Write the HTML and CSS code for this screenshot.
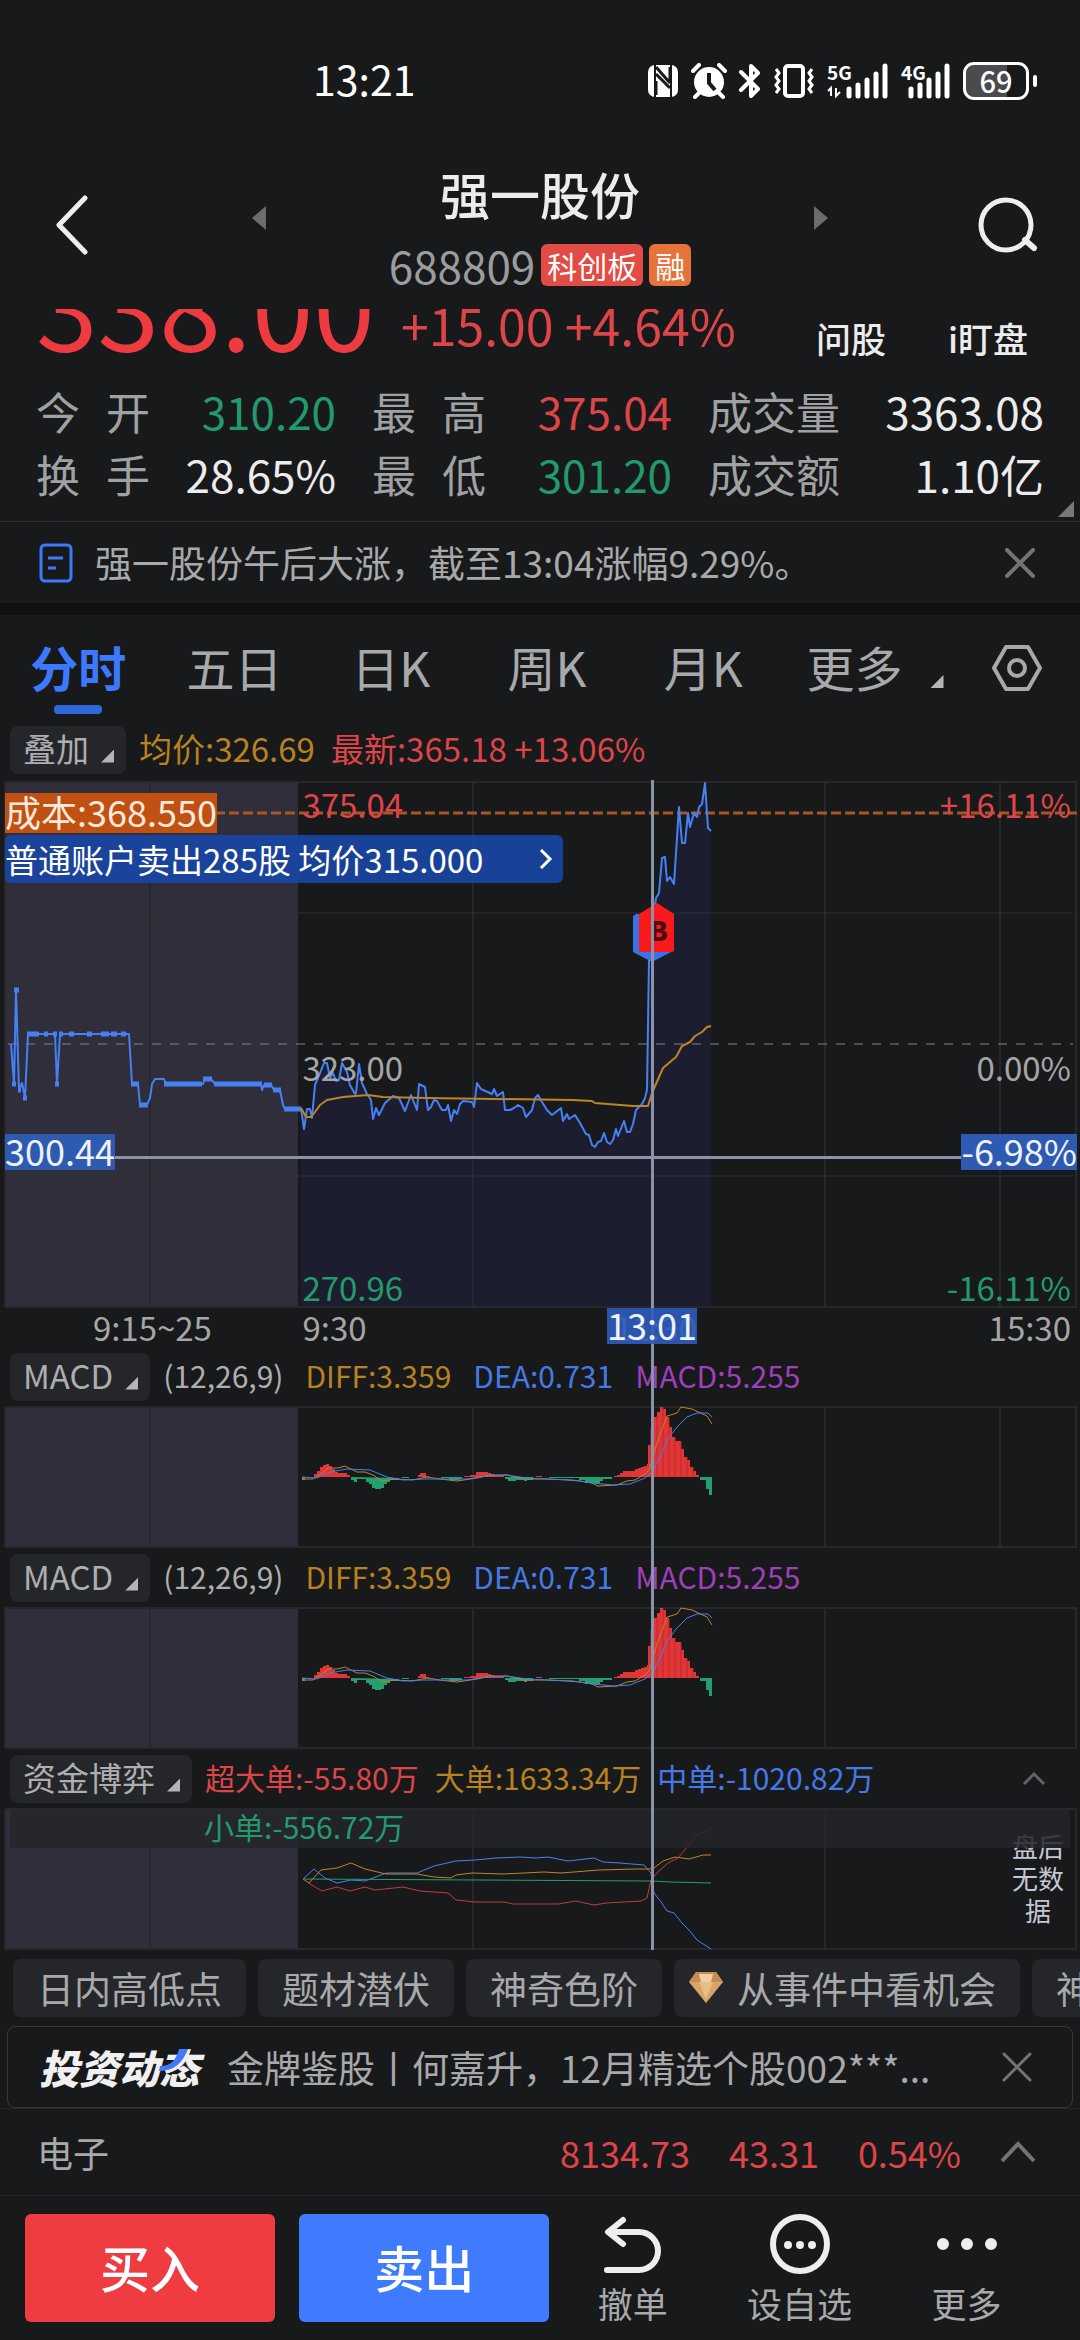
FILE: index.html
```html
<!DOCTYPE html>
<html lang="zh-CN">
<head>
<meta charset="utf-8">
<meta name="viewport" content="width=device-width, initial-scale=1">
<title>强一股份 688809</title>
<link rel="stylesheet" href="styles.css">
</head>
<body>
<div class="status">
  <span class="status-time">13:21</span>
  <div class="status-icons">
    <svg width="32" height="34" viewBox="0 0 32 34"><rect x="1" y="1" width="30" height="32" rx="7" fill="#fff"/><path d="M8 1v32M24 1v32" stroke="#18191b" stroke-width="2"/><path d="M9 3l14 16M9 10l14 14M9 17v14M23 19V3" stroke="#18191b" stroke-width="3" fill="none"/></svg>
    <svg width="36" height="36" viewBox="0 0 36 36"><circle cx="18" cy="19" r="15" fill="#fff"/><path d="M2 8l6-6M34 8l-6-6M8 30l-4 4M28 30l4 4" stroke="#fff" stroke-width="4" stroke-linecap="round"/><path d="M18 10v10l6 7" stroke="#18191b" stroke-width="4" fill="none"/></svg>
    <svg width="22" height="36" viewBox="0 0 22 36"><path d="M2 9l17 17-7 7V3l7 7L2 27" fill="none" stroke="#fff" stroke-width="4" stroke-linejoin="round" stroke-linecap="round"/></svg>
    <svg width="42" height="36" viewBox="0 0 42 36"><rect x="12" y="3" width="18" height="30" rx="3" fill="none" stroke="#fff" stroke-width="4"/><path d="M3 6l3 4-3 4 3 4-3 4 3 4-3 4M39 6l-3 4 3 4-3 4 3 4-3 4 3 4" fill="none" stroke="#fff" stroke-width="3"/></svg>
    <div class="signal"><span class="signal-tag">5G</span><svg width="62" height="36" viewBox="0 0 62 36"><path d="M4 33V25l-3 3M9 25v8l4-4" stroke="#fff" stroke-width="2" fill="none"/><path d="M22 26v7M31 22v11M40 17v16M49 11v22M58 3v30" stroke="#fff" stroke-width="5" stroke-linecap="round"/></svg></div>
    <div class="signal"><span class="signal-tag">4G</span><svg width="50" height="36" viewBox="0 0 50 36"><path d="M10 26v7M19 22v11M28 17v16M37 11v22M46 3v30" stroke="#fff" stroke-width="5" stroke-linecap="round"/></svg></div>
    <div class="battery"><span>69</span></div>
  </div>
</div>

<header class="header">
  <button class="icon-btn back" aria-label="返回"><svg width="34" height="60" viewBox="0 0 34 60"><path d="M30 3L4 30l26 27" fill="none" stroke="#eee" stroke-width="5" stroke-linecap="round" stroke-linejoin="round"/></svg></button>
  <div class="stock">
    <button class="icon-btn step" aria-label="上一只"><svg width="14" height="24" viewBox="0 0 14 24"><path d="M14 0v24L0 12z" fill="#6b6c6e"/></svg></button>
    <div class="stock-id">
      <h1>强一股份</h1>
      <div class="code"><span>688809</span><span class="badge">科创板</span><span class="badge badge-orange">融</span></div>
    </div>
    <button class="icon-btn step" aria-label="下一只"><svg width="14" height="24" viewBox="0 0 14 24"><path d="M0 0v24l14-12z" fill="#6b6c6e"/></svg></button>
  </div>
  <button class="icon-btn search" aria-label="搜索"><svg width="62" height="58" viewBox="0 0 62 58"><circle cx="31" cy="29" r="25" fill="none" stroke="#eee" stroke-width="5"/><path d="M50 44l9 8" stroke="#eee" stroke-width="6" stroke-linecap="round"/></svg></button>
</header>

<section class="quote">
  <div class="price-row">
    <span class="price">338.00</span>
    <span class="change">+15.00 +4.64%</span>
    <nav class="quote-links"><a href="#ask">问股</a><a href="#watch">i盯盘</a></nav>
  </div>
  <dl class="stats">
    <div><dt>今开</dt><dd class="down">310.20</dd></div>
    <div><dt>最高</dt><dd class="up">375.04</dd></div>
    <div><dt>成交量</dt><dd>3363.08</dd></div>
    <div><dt>换手</dt><dd>28.65%</dd></div>
    <div><dt>最低</dt><dd class="down">301.20</dd></div>
    <div><dt>成交额</dt><dd>1.10亿</dd></div>
  </dl>
  <i class="corner"></i>
</section>

<div class="news">
  <svg width="34" height="40" viewBox="0 0 34 40"><rect x="2" y="2" width="30" height="36" rx="4" fill="none" stroke="#3d79fc" stroke-width="3"/><path d="M9 15h15M9 25h8" stroke="#3d79fc" stroke-width="3"/></svg>
  <a class="news-text" href="#news">强一股份午后大涨，截至13:04涨幅9.29%。</a>
  <button class="icon-btn" aria-label="关闭"><svg width="30" height="30" viewBox="0 0 30 30"><path d="M2 2l26 26M28 2L2 28" stroke="#737476" stroke-width="4" stroke-linecap="round"/></svg></button>
</div>

<nav class="tabs">
  <button class="tab active">分时</button>
  <button class="tab">五日</button>
  <button class="tab">日K</button>
  <button class="tab">周K</button>
  <button class="tab">月K</button>
  <button class="tab-more">更多<i class="tri"></i></button>
  <button class="icon-btn tab-set" aria-label="设置"><svg width="50" height="46" viewBox="0 0 50 46"><path d="M14 2h22l12 21-12 21H14L2 23z" fill="none" stroke="#a8a9aa" stroke-width="4" stroke-linejoin="round"/><circle cx="25" cy="23" r="8" fill="none" stroke="#a8a9aa" stroke-width="4"/></svg></button>
</nav>

<main class="charts">
  <div class="bar">
    <button class="pick">叠加<i class="tri"></i></button>
    <div class="bar-main"><span class="gold">均价:326.69</span><span class="up">最新:365.18 +13.06%</span></div>
  </div>

  <div class="panel panel-price">
    <svg class="plot" viewBox="0 0 1080 528" preserveAspectRatio="none">
      <rect x="5" y="1" width="293" height="526" fill="#2f2e3a"/>
      <path d="M301 328L304 349 307 329 310 329 312 338 315 305 320 293 324 283 327 283 330 298 333 293 336 301 339 300 342 283 347 292 350 305 355 314 356 313 359 284 362 303 367 314 371 320 373 339 376 328 379 335 385 323 393 316 399 318 405 331 411 315 417 330 419 304 425 307 428 330 431 327 434 320 437 321 442 330 446 330 448 325 451 341 454 330 457 334 460 324 463 321 472 322 474 327 477 303 481 309 492 314 494 309 497 316 503 312 505 330 510 330 514 328 518 325 523 328 526 337 532 330 535 318 538 315 542 322 547 330 552 335 561 328 563 341 567 334 569 339 575 335 580 343 586 354 589 355 592 365 595 367 598 362 601 361 604 353 607 362 610 364 613 360 616 349 618 356 624 341 627 352 630 352 633 344 636 330 642 324 645 318 647 310 649 180 652 147 656 118 659 113 662 78 665 77 667 101 670 97 674 104 679 27 682 63 685 63 688 33 690 47 694 33 697 37 699 27 702 24 705 3 708 48 711 51V527H301z" fill="#1d1d30"/>
      <path d="M5 2H1077M5 527H1077M5 2V527M1076 2V527M150 2V527M473 2V527M825 2V527M1000 2V527" class="grid"/>
      <path d="M8 133H1073M8 396H1073" class="grid thin"/>
      <path d="M8 264H1073" stroke="#7c8494" stroke-width="1" stroke-dasharray="9 9"/>
      <path d="M215 33H1077" stroke="#ab5427" stroke-width="3" stroke-dasharray="10 4"/>
      <path d="M11 264L14 304 16 210 19 310 22 303 25 318 28 254 55 254 57 304 60 254 129 254 132 304 138 304 140 325 147 325 150 318 152 304 155 299 164 299 166 304 203 304 205 299 211 299 215 304 261 304 262 310 264 305 271 305 274 310 280 310 283 325 285 329 301 329" class="line blue wide"/>
      <path d="M27 254h12M44 254h4M53 254h4M59 254h4M69 254h5M87 254h5M101 254h8M111 254h6M121 254h5M164 304h38M203 299h9M214 304h48M264 305h8M273 310h8M284 329h17M131 304h8M139 325h9M14 210h5M12 304h4M55 304h4M23 318h4M18 310h3" stroke="#4680f5" stroke-width="5"/>
      <path d="M301 328L304 349 307 329 310 329 312 338 315 305 320 293 324 283 327 283 330 298 333 293 336 301 339 300 342 283 347 292 350 305 355 314 356 313 359 284 362 303 367 314 371 320 373 339 376 328 379 335 385 323 393 316 399 318 405 331 411 315 417 330 419 304 425 307 428 330 431 327 434 320 437 321 442 330 446 330 448 325 451 341 454 330 457 334 460 324 463 321 472 322 474 327 477 303 481 309 492 314 494 309 497 316 503 312 505 330 510 330 514 328 518 325 523 328 526 337 532 330 535 318 538 315 542 322 547 330 552 335 561 328 563 341 567 334 569 339 575 335 580 343 586 354 589 355 592 365 595 367 598 362 601 361 604 353 607 362 610 364 613 360 616 349 618 356 624 341 627 352 630 352 633 344 636 330 642 324 645 318 647 310 649 180 652 147 656 118 659 113 662 78 665 77 667 101 670 97 674 104 679 27 682 63 685 63 688 33 690 47 694 33 697 37 699 27 702 24 705 3 708 48 711 51" class="line blue wide"/>
      <path d="M301 328L306 337 311 337 315 332 320 325 327 320 343 317 368 315 383 317 427 318 573 320 592 321 595 323 633 326 648 326 652 313 663 288 676 277 682 266 690 262 695 256 702 252 707 247 711 246" class="line orange wide"/>
    </svg>
    <span class="scale scale-left top up">375.04</span>
    <span class="scale scale-right top up">+16.11%</span>
    <span class="scale scale-left mid">323.00</span>
    <span class="scale scale-right mid">0.00%</span>
    <span class="scale scale-left bottom down">270.96</span>
    <span class="scale scale-right bottom down">-16.11%</span>
    <span class="cost">成本:368.550</span>
    <button class="trade">普通账户卖出285股 均价315.000<svg width="14" height="22" viewBox="0 0 14 22"><path d="M2 2l9 9-9 9" fill="none" stroke="#fff" stroke-width="3"/></svg></button>
    <i class="cross-h"></i>
    <span class="tag tag-price">300.44</span>
    <span class="tag tag-percent">-6.98%</span>
    <div class="marker">
      <svg width="42" height="60" viewBox="0 0 42 60"><path d="M0 13l3-2h35v38L19 59 0 49z" fill="#3a73e8"/><path d="M24 0l17 11v36q0 2-2 2H8q-2 0-2-2V11z" fill="#fb1a1b"/></svg>
      <b>B</b>
    </div>
  </div>

  <div class="axis">
    <span class="axis-pre">9:15~25</span><span class="axis-open">9:30</span><span class="axis-noon">11:30</span><span class="axis-close">15:30</span>
    <span class="tag tag-time">13:01</span>
  </div>

  <div class="bar">
    <button class="pick">MACD<i class="tri"></i></button>
    <div class="bar-main small wide-gap"><span>(12,26,9)</span><span class="gold">DIFF:3.359</span><span class="azure">DEA:0.731</span><span class="violet">MACD:5.255</span></div>
  </div>
  <div class="panel panel-sub">
    <svg class="plot" viewBox="0 0 1080 142" preserveAspectRatio="none">
      <defs>
        <g id="macd">
          <path d="M314 71V68h3V65h3V61h3V59h3V58h3V60h3V63h3V66h3V67h9V69h3V71zM418 71v-2h2v-2h6v3h3v1zM464 71v-1h6v-1h6v-3h12v1h3v1h3v1h10v2zM536 71v-1h6v1zM614 71v-1h3v-1h3v-2h3v-2h12v-2h3v-1h3v-1h3v-1h3V58h1V39h3V23h3V11h3V6h3V1h3V3h3V11h3V21h3V31h3V35h6V43h3V51h3V54h3V61h3V65h3V69h3V71z" fill="#e23535"/>
          <path d="M302 71h3v3h-3zM351 71v3h3v2h3v-3h9v3h3v2h3v4h3v1h6v-1h3v-4h3v-2h3v-2h9v-2zM402 71h7v1h-7zM441 71v1h8v2h10v-1h3v-2zM505 71v2h3v2h8v-1h8v1h3v-1h6v-3zM549 71v1h30v2h6v3h15v-2h3v-2h9v-2zM700 71v3h6v9h3v6h3V71z" fill="#23a06f"/>
          <path d="M651 23V71M657 10V71M663 1V71M669 12V71M675 31V71M681 36V71M687 51V71M693 61V71" stroke="#b92c30" stroke-width="1"/>
          <path d="M302 73L313 73 322 67 328 62 338 62 345 60 357 66 365 66 373 69 382 75 395 73 413 74 427 71 440 73 457 75 477 72 490 69 507 69 523 73 547 73 567 74 580 75 592 77 598 80 617 79 627 75 635 74 645 68 649 64 657 37 667 10 677 7 681 1 692 3 707 10 712 18" class="line orange"/>
          <path d="M302 71L317 72 330 66 347 63 370 64 387 71 403 74 423 73 447 73 467 73 487 70 507 69 527 72 547 73 573 74 593 77 613 79 630 78 645 72 652 66 660 51 667 34 677 21 687 11 697 7 708 7 712 11" class="line blue"/>
        </g>
      </defs>
      <rect x="5" y="1" width="293" height="140" fill="#2f2e3a"/>
      <path d="M5 1H1077M5 141H1077M5 1V141M1076 1V141M150 1V141M473 1V141M825 1V141M1000 1V141" class="grid"/>
      <use href="#macd"/>
    </svg>
  </div>

  <div class="bar">
    <button class="pick">MACD<i class="tri"></i></button>
    <div class="bar-main small wide-gap"><span>(12,26,9)</span><span class="gold">DIFF:3.359</span><span class="azure">DEA:0.731</span><span class="violet">MACD:5.255</span></div>
  </div>
  <div class="panel panel-sub">
    <svg class="plot" viewBox="0 0 1080 142" preserveAspectRatio="none">
      <rect x="5" y="1" width="293" height="140" fill="#2f2e3a"/>
      <path d="M5 1H1077M5 141H1077M5 1V141M1076 1V141M150 1V141M473 1V141M825 1V141" class="grid"/>
      <use href="#macd"/>
    </svg>
  </div>

  <div class="bar">
    <button class="pick">资金博弈<i class="tri"></i></button>
    <div class="bar-main small"><span class="up">超大单:-55.80万</span><span class="gold">大单:1633.34万</span><span class="azure">中单:-1020.82万</span></div>
    <button class="icon-btn fold" aria-label="收起"><svg width="24" height="14" viewBox="0 0 24 14"><path d="M2 12L12 2l10 10" fill="none" stroke="#616267" stroke-width="3"/></svg></button>
  </div>
  <div class="panel panel-sub panel-last">
    <svg class="plot" viewBox="0 0 1080 142" preserveAspectRatio="none">
      <rect x="5" y="1" width="293" height="140" fill="#2f2e3a"/>
      <path d="M5 1H1077M5 141H1077M5 1V141M1076 1V141M150 1V141M473 1V141M825 1V141" class="grid"/>
      <path d="M303 71L314 61 325 70 337 75 351 72 365 73 386 65 417 65 434 58 456 53 475 52 496 50 520 49 536 50 548 49 568 53 594 50 603 54 620 55 644 57 651 65 654 85 661 94 667 103 674 105 682 115 690 123 697 132 711 141" class="line blue"/>
      <path d="M303 71L309 75 321 62 337 60 351 55 365 61 386 66 417 66 434 69 451 70 456 67 472 65 503 66 544 64 561 65 599 62 634 61 649 61 654 60 663 53 675 49 689 51 703 47 711 47" class="line orange"/>
      <path d="M303 71L651 73 672 74 711 75" class="line green"/>
      <path d="M303 71L310 76 322 83 337 79 350 83 365 79 375 82 403 79 420 83 448 85 456 92 475 94 504 94 513 96 558 96 576 93 594 97 606 95 641 93 647 90 651 72 658 64 668 55 678 50 687 39 696 27 706 24 711 20" class="line red"/>
    </svg>
    <p class="no-data">盘后<br>无数<br>据</p>
    <div class="strip"><span class="down">小单:-556.72万</span></div>
  </div>
  <i class="cross-v"></i>
</main>

<div class="chips">
  <button class="chip">日内高低点</button>
  <button class="chip">题材潜伏</button>
  <button class="chip">神奇色阶</button>
  <button class="chip chip-gem"><svg width="34" height="32" viewBox="0 0 34 32"><path d="M7 0h20l7 10-17 21L0 10z" fill="#d9a468"/><path d="M7 0h20l7 10H0z" fill="#c48d55"/><path d="M10 2h14l-2 8H12z" fill="#f0cfa0"/><path d="M10 10h14l-7 17z" fill="#e8bd88"/></svg>从事件中看机会</button>
  <button class="chip">神奇电波</button>
</div>

<div class="promo">
  <div class="promo-logo">投资动态<svg width="30" height="24" viewBox="0 0 30 24"><path d="M1 18C12 18 17 12 20 1l9 0C24 14 16 23 0 23z" fill="#3f7bff"/></svg></div>
  <a class="promo-text" href="#promo">金牌鉴股丨何嘉升，12月精选个股002***...</a>
  <button class="icon-btn" aria-label="关闭"><svg width="30" height="30" viewBox="0 0 30 30"><path d="M2 2l26 26M28 2L2 28" stroke="#737476" stroke-width="3" stroke-linecap="round"/></svg></button>
</div>

<div class="sector">
  <span class="sector-name">电子</span>
  <span class="up">8134.73</span><span class="up">43.31</span><span class="up">0.54%</span>
  <button class="icon-btn" aria-label="展开"><svg width="36" height="22" viewBox="0 0 36 22"><path d="M2 20L18 3l16 17" fill="none" stroke="#737476" stroke-width="4"/></svg></button>
</div>

<footer class="actions">
  <button class="trade-btn buy">买入</button>
  <button class="trade-btn sell">卖出</button>
  <button class="action"><svg width="60" height="60" viewBox="0 0 60 60"><path d="M20 6L5 18l15 12" fill="none" stroke="#eee" stroke-width="6" stroke-linejoin="round" stroke-linecap="round"/><path d="M6 18h30a19 19 0 0 1 0 38H4" fill="none" stroke="#eee" stroke-width="6" stroke-linecap="round"/></svg>撤单</button>
  <button class="action"><svg width="60" height="60" viewBox="0 0 60 60"><circle cx="30" cy="30" r="27" fill="none" stroke="#eee" stroke-width="6"/><path d="M18 31h0M30 31h0M42 31h0" stroke="#eee" stroke-width="8" stroke-linecap="round"/></svg>设自选</button>
  <button class="action"><svg width="60" height="60" viewBox="0 0 60 60"><path d="M6 30h0M30 30h0M54 30h0" stroke="#eee" stroke-width="12" stroke-linecap="round"/></svg>更多</button>
</footer>
</body>
</html>
```
FILE: styles.css
```css
* { box-sizing: border-box; }

body {
  margin: 0;
  background: #18191b;
  color: #ececec;
  font-family: "Noto Sans CJK SC", "Noto Sans", sans-serif;
  font-size: 36px;
  overflow-x: hidden;
}

button {
  margin: 0;
  padding: 0;
  border: 0;
  background: none;
  color: inherit;
  font: inherit;
}

a { color: inherit; text-decoration: none; }
svg { display: block; flex: none; }
h1, dl, dt, dd, p { margin: 0; font-weight: 400; }
.icon-btn { display: flex; flex: none; }

.up { color: #dd4549; }
.down { color: #239a6c; }
.gold { color: #b9811f; }
.azure { color: #4479e6; }
.violet { color: #9e40ba; }

.tri {
  width: 13px;
  height: 13px;
  background: #b4b5b6;
  clip-path: polygon(100% 0, 100% 100%, 0 100%);
}

/* status bar */
.status {
  display: flex;
  align-items: center;
  justify-content: space-between;
  padding: 54px 51px 0 313px;
  color: #fff;
}
.status-time { padding-bottom: 6px; font-size: 41px; line-height: 48px; }
.status-icons { display: flex; align-items: center; gap: 12px; }
.signal { position: relative; }
.signal-tag {
  position: absolute;
  left: 0;
  top: -2px;
  font-size: 19px;
  line-height: 22px;
  font-weight: 700;
}
.battery {
  position: relative;
  width: 66px;
  height: 38px;
  border: 3px solid #fff;
  border-radius: 11px;
  background: linear-gradient(90deg, #4a4b4d 69%, transparent 69%);
  font-size: 29px;
  font-weight: 500;
  line-height: 30px;
  text-align: center;
}
.battery::after {
  content: "";
  position: absolute;
  right: -11px;
  top: 10px;
  width: 4px;
  height: 12px;
  border-radius: 2px;
  background: #fff;
}

/* header */
.header {
  display: grid;
  grid-template-columns: 1fr 58% 1fr;
  align-items: center;
  padding: 56px 43px 23px;
}
.back { justify-self: start; padding-left: 12px; }
.search { justify-self: end; }
.stock { display: flex; align-items: center; justify-content: space-between; }
.step { padding-bottom: 14px; }
.stock-id { display: flex; flex-direction: column; align-items: center; gap: 22px; }
h1 { font-size: 50px; line-height: 58px; font-weight: 500; }
.code { display: flex; align-items: center; gap: 6px; color: #9b9c9d; font-size: 44px; line-height: 42px; }
.badge {
  padding: 0 6px;
  border-radius: 6px;
  background: #e14c45;
  color: #fff;
  font-size: 30px;
  line-height: 42px;
}
.badge-orange { background: #e5733b; }

/* quote */
.quote { position: relative; border-bottom: 1px solid #2b2c2f; padding: 0 36px 15px; }
.price-row { display: flex; align-items: flex-end; height: 49px; overflow: hidden; }
.price { margin-bottom: 14px; color: #ee3b40; font-size: 111px; line-height: 80px; }
.change { margin: 0 0 9px 26px; color: #dd4549; font-size: 50px; line-height: 50px; }
.quote-links {
  display: flex;
  gap: 62px;
  margin-left: auto;
  padding-right: 16px;
  font-size: 35px;
  font-weight: 500;
  line-height: 40px;
}
.stats {
  display: grid;
  grid-template-columns: 300fr 300fr 336fr;
  column-gap: 36px;
  padding-top: 22px;
  font-size: 44px;
  line-height: 63px;
}
.stats div { display: flex; justify-content: space-between; }
.stats dt { width: 114px; color: #a0a1a2; text-align-last: justify; white-space: nowrap; }
.stats div:nth-child(3n) dt { width: 132px; }
.corner {
  position: absolute;
  right: 6px;
  bottom: 4px;
  width: 16px;
  height: 16px;
  background: #77787a;
  clip-path: polygon(100% 0, 100% 100%, 0 100%);
}

/* news line */
.news {
  display: flex;
  align-items: center;
  gap: 22px;
  padding: 0 45px 0 39px;
  border-bottom: 12px solid #0f1012;
  color: #a8a9aa;
  font-size: 37px;
  line-height: 81px;
}
.news-text { flex: 1; }

/* period tabs */
.tabs {
  display: flex;
  align-items: center;
  padding: 18px 38px 0 0;
  color: #a8a9aa;
  font-size: 48px;
  line-height: 66px;
}
.tab { position: relative; flex: 0 0 15%; padding-bottom: 20px; }
.tab.active { color: #3d79fc; font-weight: 700; }
.tab.active::after {
  content: "";
  position: absolute;
  left: 50%;
  bottom: 5px;
  width: 48px;
  height: 9px;
  margin-left: -24px;
  border-radius: 4px;
  background: #2f68d8;
}
.tab-more { display: flex; align-items: flex-end; gap: 28px; padding: 0 0 20px 25px; }
.tab-more .tri { margin-bottom: 11px; }
.tab-set { margin-left: auto; padding-bottom: 17px; }

/* chart headings */
.charts { position: relative; padding-top: 7px; }
.bar { display: flex; align-items: center; gap: 13px; height: 48px; padding: 0 34px 0 10px; }
.pick {
  display: flex;
  align-items: center;
  gap: 12px;
  padding: 0 12px 4px 13px;
  border-radius: 8px;
  background: #25262a;
  color: #adaeaf;
  font-size: 33px;
  line-height: 44px;
}
.pick .tri { margin-top: 16px; }
.bar-main {
  display: flex;
  gap: 16px;
  padding-bottom: 4px;
  color: #adaeaf;
  font-size: 33px;
  line-height: 44px;
  white-space: nowrap;
}
.bar-main.small { font-size: 30px; }
.bar-main.wide-gap { gap: 22px; }
.fold { margin-left: auto; }

/* plots */
.panel { position: relative; }
.plot { width: 100%; }
.panel-price { margin-top: 6px; }
.panel-sub { margin: 5px 0 6px; }
.panel-last { margin-bottom: 0; }
.panel-price .plot { height: 528px; }
.panel-sub .plot { height: 142px; }
.grid { fill: none; stroke: #27282b; stroke-width: 2; }
.thin { stroke-width: 1; stroke: #303134; }
.line { fill: none; stroke-width: 1; stroke-linejoin: round; }
.line.wide { stroke-width: 2; }
.blue { stroke: #4680f5; }
.orange { stroke: #bd8526; }
.green { stroke: #23a06f; }
.red { stroke: #c23b40; }

.scale { position: absolute; font-size: 33px; line-height: 34px; color: #a5a6a7; }
.scale.up { color: #dd4549; }
.scale.down { color: #239a6c; }
.scale-left { left: 28%; }
.scale-right { right: 9px; }
.scale.top { top: 7px; }
.scale.mid { top: 270px; }
.scale.bottom { bottom: 4px; }

.cost {
  position: absolute;
  left: 5px;
  top: 13px;
  padding-bottom: 4px;
  background: #c05112;
  color: #fbe9dc;
  font-size: 36px;
  line-height: 36px;
}
.trade {
  position: absolute;
  left: 5px;
  top: 55px;
  display: flex;
  align-items: center;
  gap: 56px;
  padding-right: 10px;
  border-radius: 6px;
  background: rgba(24, 72, 168, .88);
  color: #fff;
  font-size: 33px;
  line-height: 48px;
  white-space: nowrap;
}
.cross-h { position: absolute; left: 5px; right: 5px; top: 376px; height: 3px; background: #8b93a8; }
.cross-v { position: absolute; left: 60.3%; top: 61px; bottom: 0; width: 3px; background: #8b93a8; }
.tag {
  position: absolute;
  padding-bottom: 4px;
  background: #2f5ab2;
  color: #eef2fb;
  font-size: 36px;
  line-height: 32px;
}
.tag-price { left: 5px; top: 354px; }
.tag-percent { right: 3px; top: 354px; }
.tag-time { left: 56.2%; top: 0; z-index: 1; background: rgba(46, 92, 190, .9); }
.marker { position: absolute; left: 58.6%; top: 123px; }
.marker b {
  position: absolute;
  left: 16px;
  top: 13px;
  color: #4c0d14;
  font-size: 27px;
  font-weight: 900;
  line-height: 28px;
}

.axis { position: relative; height: 45px; color: #a5a6a7; font-size: 33px; line-height: 38px; }
.axis span { position: absolute; }
.axis .tag { font-size: 36px; line-height: 32px; }
.axis-pre { left: 8.6%; }
.axis-open { left: 28%; }
.axis-noon { left: 56.9%; }
.axis-close { right: 9px; }

.strip {
  position: absolute;
  left: 10px;
  right: 10px;
  top: 2px;
  height: 38px;
  padding-left: 194px;
  background: rgba(37, 38, 42, .85);
  font-size: 30px;
  line-height: 32px;
}
.no-data {
  position: absolute;
  right: 16px;
  top: 22px;
  color: #c4c7d4;
  font-size: 26px;
  line-height: 32px;
  text-align: center;
}

/* shortcut chips */
.chips { display: flex; gap: 12px; padding: 9px 0 9px 13px; overflow: hidden; }
.chip {
  display: flex;
  flex: none;
  align-items: center;
  gap: 14px;
  padding: 0 24px;
  border-radius: 8px;
  background: #25262a;
  color: #a8a9aa;
  font-size: 37px;
  line-height: 58px;
}
.chip-gem { padding-left: 15px; }

/* promo line */
.promo {
  display: flex;
  align-items: center;
  gap: 28px;
  height: 82px;
  margin: 0 7px;
  padding: 0 40px 0 31px;
  border: 1px solid #36373a;
  border-radius: 8px;
}
.promo-logo {
  position: relative;
  color: #f0f0f0;
  font-size: 40px;
  font-style: italic;
  font-weight: 900;
  line-height: 60px;
}
.promo-logo svg { position: absolute; left: 120px; top: 11px; }
.promo-text { flex: 1; color: #a8a9aa; font-size: 37px; line-height: 60px; white-space: nowrap; }

/* sector line */
.sector {
  display: flex;
  align-items: center;
  gap: 39px;
  padding: 0 44px 0 37px;
  border: solid #27282a;
  border-width: 1px 0;
  color: #a8a9aa;
  font-size: 36px;
  line-height: 86px;
}
.sector-name { flex: 1; }

/* bottom actions */
.actions { display: flex; padding: 18px 30px 18px 25px; }
.trade-btn {
  flex: 0 0 24.4%;
  margin-right: 24px;
  padding-bottom: 4px;
  border-radius: 6px;
  color: #fff;
  font-size: 50px;
  font-weight: 500;
  line-height: 104px;
}
.buy { background: #ee3c41; }
.sell { margin-right: 0; background: #3f7bff; }
.action {
  display: flex;
  flex: 1;
  flex-direction: column;
  align-items: center;
  gap: 11px;
  color: #a8a9aa;
  font-size: 35px;
  line-height: 36px;
}
```
